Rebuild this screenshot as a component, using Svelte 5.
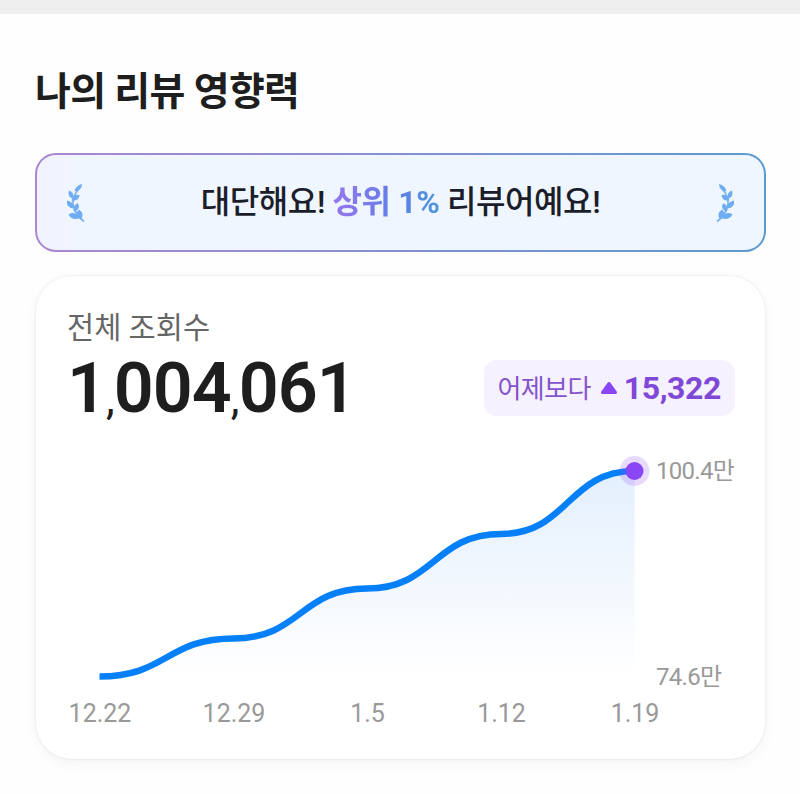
<script>
    const points = [
        { label: "12.22", x: 63.5, y: 226.5 },
        { label: "12.29", x: 197.5, y: 188.5 },
        { label: "1.5", x: 331, y: 138.5 },
        { label: "1.12", x: 465, y: 84 },
        { label: "1.19", x: 598.5, y: 21 },
    ]

    const bottom = 226
    const last = points[points.length - 1]

    // smooth curve, flat at every point
    let line = `M${points[0].x} ${points[0].y}`
    for (let i = 1; i < points.length; i++) {
        const a = points[i - 1]
        const b = points[i]
        const mid = (a.x + b.x) / 2
        line += ` C${mid} ${a.y} ${mid} ${b.y} ${b.x} ${b.y}`
    }
    const area = `${line} V${bottom} H${points[0].x} Z`

    const total = "1,004,061".split("")
</script>

{#snippet laurel(cls)}
    <svg class={cls} width="20" height="40" viewBox="0 0 20 40">
        <path d="M13 6 Q6 13 7 21 Q9 32 18 38.5" fill="none" stroke="#75b0ee" stroke-width="1.6" />
        <g fill="#6fadf2">
            <path d="M8.500 8.500Q9.500 2.500 16 1Q16 7.500 8.500 8.500Z" />
            <path d="M6.500 15.500Q1 13.500 3 7.500Q9 9.500 6.500 15.500Z" />
            <path d="M5.500 17.500Q7 11 13.500 12Q13 18.500 5.500 17.500Z" />
            <path d="M7.500 25.500Q0 24.500 1 17.500Q8 18.500 7.500 25.500Z" />
            <path d="M8.500 29Q5.500 24 11.500 20Q15.500 25.500 8.500 29Z" />
            <path d="M14 35Q6 38 2.500 31.500Q9 27.500 14 35Z" />
            <path d="M14.500 36.500Q8 31 13 26.500Q19.500 31 14.500 36.500Z" />
        </g>
    </svg>
{/snippet}

<div class="page">
    <div class="divider"></div>

    <h1>나의 리뷰 영향력</h1>

    <div class="banner">
        {@render laurel("laurel")}
        <p>대단해요! <strong>상위 1%</strong> 리뷰어예요!</p>
        {@render laurel("laurel flip")}
    </div>

    <div class="card">
        <div class="label">전체 조회수</div>
        <div class="summary">
            <div class="total">
                {#each total as c}<span class:comma={c === ","}>{c}</span>{/each}
            </div>
            <div class="badge">
                <span>어제보다</span>
                <svg width="18" height="14" viewBox="0 0 18 14">
                    <path d="M9 2.500L15.500 11.500H2.500Z" fill="#8a45f5" stroke="#8a45f5" stroke-width="3" stroke-linejoin="round" />
                </svg>
                <b>15,322</b>
            </div>
        </div>

        <svg class="chart" width="729" height="300" viewBox="0 0 729 300">
            <defs>
                <linearGradient id="fill" x1="0" y1="0" x2="0" y2="1">
                    <stop offset="0" stop-color="#0070f0" stop-opacity="0.11" />
                    <stop offset="1" stop-color="#0070f0" stop-opacity="0" />
                </linearGradient>
            </defs>
            <path d={area} fill="url(#fill)" />
            <path d={line} fill="none" stroke="#0580f8" stroke-width="6.500" />
            <circle cx={last.x} cy={last.y} r="15" fill="#8a45f5" fill-opacity="0.2" />
            <circle cx={last.x} cy={last.y} r="9" fill="#8a45f5" />
            <text x="620" y="29">100.4만</text>
            <text x="620" y="235">74.6만</text>
            {#each points as p}
                <text class="date" x={p.x + 0.5} y="271.5" text-anchor="middle">{p.label}</text>
            {/each}
        </svg>
    </div>
</div>

<style>
    :global(body) {
        background: #fff;
    }

    .page {
        box-sizing: border-box;
        height: 794px;
        overflow: hidden;
        background: #fefefe;
        color: #1e1e1e;
        font-family: Roboto, "Noto Sans CJK KR", sans-serif;
    }

    .divider {
        height: 14px;
        background: #efefef;
    }

    h1 {
        margin: 49px 35px 32px;
        font-size: 39px;
        line-height: 58px;
        font-weight: 700;
        letter-spacing: -0.7px;
    }

    .banner {
        box-sizing: border-box;
        display: flex;
        align-items: center;
        justify-content: space-between;
        width: 731px;
        height: 99px;
        margin-left: 35px;
        padding: 0 29px;
        border: 2px solid transparent;
        border-radius: 21px;
        background:
            linear-gradient(90deg, #f1f3fe, #eff6ff 8%) padding-box,
            linear-gradient(90deg, #ac86d0, #5b9bcf) border-box;
    }

    .banner p {
        margin: 0 0 8px;
        color: #1b1e2a;
        font-size: 32px;
        font-weight: 500;
        letter-spacing: -0.4px;
        white-space: nowrap;
    }

    .banner strong {
        font-weight: 700;
        background: linear-gradient(90deg, #9876ee, #5f7fe5 60%, #4d97dc);
        background-clip: text;
        color: transparent;
    }

    .flip {
        transform: scaleX(-1);
    }

    .card {
        box-sizing: border-box;
        width: 729px;
        height: 483px;
        margin: 24px 0 0 36px;
        padding-top: 32px;
        border-radius: 36px;
        background: #fff;
        box-shadow: 0 0 3px rgba(0, 0, 0, 0.1), 0 5px 14px rgba(0, 0, 0, 0.04);
    }

    .label {
        margin-left: 31px;
        color: #666;
        font-size: 29.5px;
        line-height: 41px;
    }

    .summary {
        display: flex;
        align-items: center;
        justify-content: space-between;
        height: 80px;
        margin-top: -1px;
        padding: 0 30px 0 31px;
    }

    .total {
        font-size: 70px;
        line-height: 80px;
        font-weight: 600;
        letter-spacing: -1px;
        white-space: nowrap;
    }

    .comma {
        font-size: 44px;
        font-weight: 400;
        letter-spacing: -0.8px;
        line-height: 1;
        vertical-align: -2px;
    }

    .badge {
        box-sizing: border-box;
        display: flex;
        align-items: center;
        height: 56px;
        padding: 0 14px 0 13px;
        border-radius: 13px;
        background: #f5f1fe;
        color: #8554cc;
        font-size: 26px;
    }

    .badge span {
        margin-bottom: 4px;
        letter-spacing: -0.6px;
    }

    .badge svg {
        margin: 0 6px 0 9px;
    }

    .badge b {
        color: #8048d6;
        font-size: 32px;
        font-weight: 700;
        letter-spacing: -0.4px;
    }

    .chart {
        display: block;
        margin-top: 22px;
        font-size: 24px;
        letter-spacing: -0.7px;
        fill: #999;
    }

    .date {
        font-size: 25px;
        letter-spacing: 0;
    }
</style>
